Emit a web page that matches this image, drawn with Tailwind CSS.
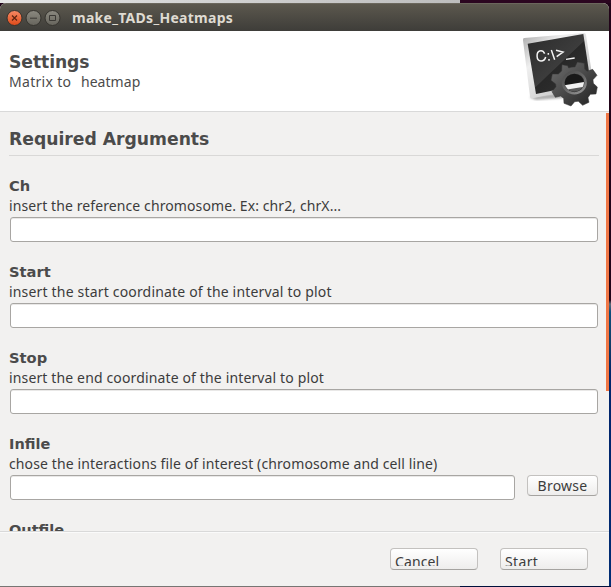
<!DOCTYPE html>
<html lang="en">
<head>
<meta charset="utf-8">
<title>make_TADs_Heatmaps</title>
<script src="https://cdn.jsdelivr.net/npm/@tailwindcss/browser@4"></script>
</head>
<body class="w-[611px] h-[587px] overflow-hidden bg-[linear-gradient(180deg,#210419_0px,#210419_300px,#5d6b78_304px,#0c4d7c_312px,#123d68_345px,#00246b_375px,#002c73_587px)] font-['Noto_Sans',sans-serif] text-[#3c3c3c] text-[14px]">
<div class="flex h-[3px]"><div class="w-[460px] bg-linear-to-r from-[#e5e5e5] to-[#bdbdbd]"></div><div class="flex-1 bg-[#2b0620]"></div></div>
<main class="w-[609px] h-[583px] flex flex-col bg-[#f2f1f0] rounded-t-[6px] overflow-hidden">
  <header class="h-[28px] shrink-0 bg-linear-to-b from-[#5c584e] to-[#3e3d39] border-t border-[#6b675d] flex items-center pl-[6px]">
    <svg class="w-[56px] h-[18px] shrink-0" viewBox="0 0 56 18" fill="none">
      <defs>
        <linearGradient id="o" x2="0" y2="1"><stop stop-color="#f58a66"/><stop offset="1" stop-color="#df4a18"/></linearGradient>
        <linearGradient id="g" x2="0" y2="1"><stop stop-color="#8b8980"/><stop offset="1" stop-color="#66645c"/></linearGradient>
      </defs>
      <circle cx="8.5" cy="9" r="7.5" fill="url(#o)" stroke="#35332e"/>
      <circle cx="27.5" cy="9" r="7.5" fill="url(#g)" stroke="#35332e"/>
      <circle cx="46.5" cy="9" r="7.5" fill="url(#g)" stroke="#35332e"/>
      <path d="M6 6.5l5 5M11 6.5l-5 5" stroke="#5b2411" stroke-width="1.2"/>
      <path d="M24 9.2h7M43.5 6.5h6v5h-6z" stroke="#3b3935"/>
    </svg>
    <h1 class="ml-[10px] font-bold text-[14px] tracking-[0.28px] leading-[20px] text-[#dfdbd2] whitespace-pre">make_TADs_Heatmaps</h1>
  </header>
  <section class="h-[81px] shrink-0 bg-white border-b border-[#d9d9d9] flex justify-between pl-[9px] pr-[8px] text-[#4b4b4b]">
    <div class="pt-[20px]">
      <h2 class="font-['DejaVu_Sans',sans-serif] font-bold text-[17.2px] tracking-[-0.08px] leading-[22px]">Settings</h2>
      <p class="text-[14px] leading-[18px] whitespace-pre"><span class="tracking-[0.3px]">Matrix to</span><span class="tracking-[1.2px]">  </span><span class="tracking-[0.05px]">heatmap</span></p>
    </div>
    <svg class="w-[80px] h-[80px]" viewBox="30 18 240 240">
      <defs>
        <linearGradient id="scr" x2="1" y2="1"><stop stop-color="#2b2b2b"/><stop offset=".5" stop-color="#3c3c3c"/><stop offset=".51" stop-color="#282828"/><stop offset="1" stop-color="#343434"/></linearGradient>
        <linearGradient id="fr" x2="1" y2="1"><stop stop-color="#a9a9a9"/><stop offset=".3" stop-color="#efefef"/><stop offset="1" stop-color="#b5b5b5"/></linearGradient>
        <linearGradient id="gear" x2="1" y2="1"><stop stop-color="#707070"/><stop offset=".55" stop-color="#444"/><stop offset="1" stop-color="#222"/></linearGradient>
        <linearGradient id="ring" x2=".7" y2="1"><stop stop-color="#4c4c4c"/><stop offset=".6" stop-color="#686868"/><stop offset="1" stop-color="#8c8c8c"/></linearGradient>
        <filter id="b"><feGaussianBlur stdDeviation="3"/></filter>
        <clipPath id="hub"><ellipse cy="-3" rx="29" ry="27"/></clipPath>
      </defs>
      <path d="M55 217l110-17 20 17-110 8z" fill="#777" opacity=".6" filter="url(#b)"/>
      <path d="M39 39L219 24q5 0 6 5l23 152L64 220q-6 1-7-5L36 46q-1-6 3-7z" fill="url(#fr)"/>
      <path d="M50 56L217 27l22 146L75 207z" fill="url(#scr)"/>
      <g fill="none" stroke="#f4f4f4" stroke-width="4.5">
        <path d="M101 86q-5-11-15-8c-10 3-12 29 4 30q11 0 14-12M112 84v5m2 13v5M121 75l10 29M135 76l21 5-19 14"/>
        <path d="M165 103l26-4" stroke-width="4"/>
      </g>
      <g transform="translate(190 176)">
        <path fill="url(#gear)" stroke="#363636" stroke-width="1.5" stroke-linejoin="round" d="M-37-57L-20-54-17-47Q-8-51 2-50L9-65 30-61 31-44 38-37 55-43 68-25 56-12 57-1 69 10 65 31 48 32 41 42 44 56 25 65 12 53 1 54-10 67-31 59-32 44-41 37-57 41-67 24-55 9-56 1-70-10-66-29-48-29-38-38z"/>
        <ellipse cy="-3" rx="34" ry="32" fill="none" stroke="url(#ring)" stroke-width="7"/>
        <g clip-path="url(#hub)">
          <path d="M-35-40h70v75h-70z" fill="#191919"/>
          <path d="M-30 5L30-5V11L-30 21z" fill="#f1f1f1"/>
          <path d="M-30 19L30 9V30H-30z" fill="#5a5a5a"/>
        </g>
      </g>
    </svg>
  </section>
  <section class="h-[419px] shrink-0 overflow-hidden flex">
    <div class="w-[590px] ml-[9px]">
      <h2 class="h-[44px] pt-[16px] border-b border-[#d9d8d7] font-['DejaVu_Sans',sans-serif] font-bold text-[17.2px] leading-[22px] text-[#4b4b4b]">Required Arguments</h2>
      <div class="h-[86px] mt-[21px]">
        <h3 class="font-['DejaVu_Sans',sans-serif] font-bold text-[14.67px] leading-[18px] text-[#4b4b4b]">Ch</h3>
        <p class="leading-[22px] h-[22px] tracking-[0.1px]">insert the reference chromosome. Ex: chr2, chrX...</p>
        <div class="ml-px w-[588px] h-[25px] bg-white border border-[#a8a6a3] rounded-[3px] shadow-[inset_0_1px_0_#e9e8e7]"></div>
      </div>
      <div class="h-[86px]">
        <h3 class="font-['DejaVu_Sans',sans-serif] font-bold text-[14.67px] leading-[18px] text-[#4b4b4b]">Start</h3>
        <p class="leading-[22px] h-[22px] tracking-[0.18px]">insert the start coordinate of the interval to plot</p>
        <div class="ml-px w-[588px] h-[25px] bg-white border border-[#a8a6a3] rounded-[3px] shadow-[inset_0_1px_0_#e9e8e7]"></div>
      </div>
      <div class="h-[86px]">
        <h3 class="font-['DejaVu_Sans',sans-serif] font-bold text-[14.67px] leading-[18px] text-[#4b4b4b]">Stop</h3>
        <p class="leading-[22px] h-[22px] tracking-[0.14px]">insert the end coordinate of the interval to plot</p>
        <div class="ml-px w-[588px] h-[25px] bg-white border border-[#a8a6a3] rounded-[3px] shadow-[inset_0_1px_0_#e9e8e7]"></div>
      </div>
      <div class="h-[86px]">
        <h3 class="font-['DejaVu_Sans',sans-serif] font-bold text-[14.5px] leading-[18px] text-[#4b4b4b]">Infile</h3>
        <p class="leading-[22px] h-[22px] tracking-[0.12px]">chose the interactions file of interest (chromosome and cell line)</p>
        <div class="flex gap-[12px] ml-px">
          <div class="w-[505px] h-[25px] bg-white border border-[#a8a6a3] rounded-[3px] shadow-[inset_0_1px_0_#e9e8e7]"></div>
          <button class="w-[71px] h-[21px] border border-[#c3c1bf] border-b-[#a5a3a0] rounded-[4px] bg-linear-to-b from-white to-[#eeedec] leading-[19px] tracking-[0.25px]">Browse</button>
        </div>
      </div>
      <h3 class="font-['DejaVu_Sans',sans-serif] font-bold text-[14.5px] leading-[18px] text-[#4b4b4b]">Outfile</h3>
    </div>
    <div class="ml-[7px] mt-px w-[3px] h-[278px] bg-[#f07746]"></div>
  </section>
  <footer class="flex-1 border-t border-[#d9d9d9] shadow-[inset_0_1px_0_#fafafa] flex justify-end gap-[22px] pt-[16px] pr-[21px]">
    <button class="flex items-start w-[88px] h-[22px] border border-[#c3c1bf] border-b-[#a5a3a0] rounded-[4px] bg-linear-to-b from-white to-[#eeedec] pl-[4px]"><span class="block h-[17px] pt-[3px] leading-[20px] overflow-hidden tracking-[0.1px]">Cancel</span></button>
    <button class="flex items-start w-[88px] h-[22px] border border-[#c3c1bf] border-b-[#a5a3a0] rounded-[4px] bg-linear-to-b from-white to-[#eeedec] pl-[4px]"><span class="block h-[17px] pt-[3px] leading-[20px] overflow-hidden tracking-[0.35px]">Start</span></button>
  </footer>
</main>
<div class="flex h-[1px]"><div class="w-[460px] bg-[#777573]"></div><div class="flex-1 bg-[#00103c]"></div></div>
</body>
</html>
